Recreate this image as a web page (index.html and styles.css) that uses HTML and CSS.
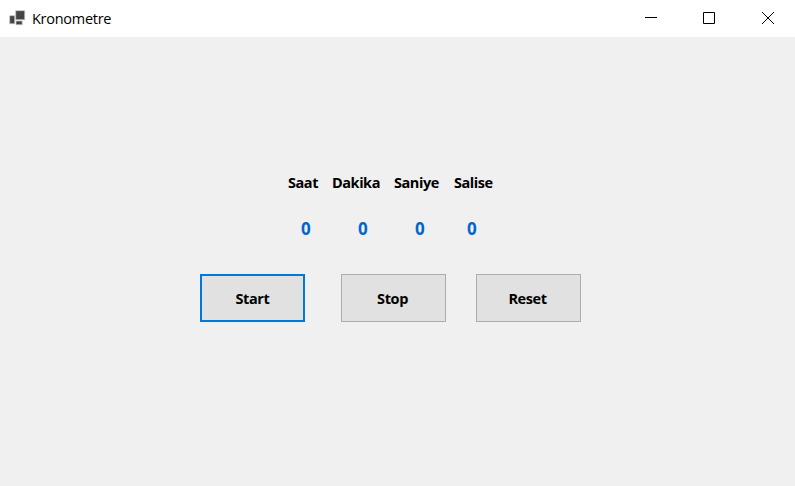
FILE: index.html
```html
<!DOCTYPE html>
<html lang="tr">
<head>
<meta charset="utf-8">
<title>Kronometre</title>
<link rel="stylesheet" href="styles.css">
</head>
<body>
<header class="titlebar">
  <svg class="app-icon" width="17" height="17" viewBox="0 0 17 17"><path fill="#444" stroke="#c4c4c4" stroke-width=".7" d="M.7 5.7h5v8h-5zM7 11h6.2v3.7H7zM6.7.7h9v9h-9z"/></svg>
  <span class="title">Kronometre</span>
  <nav class="controls">
    <svg width="58" height="37" viewBox="0 0 58 37"><path d="M23 17.5h12"/></svg>
    <svg width="59" height="37" viewBox="0 0 59 37"><path d="M23.5 12.5h11v11h-11z"/></svg>
    <svg width="56" height="37" viewBox="0 0 56 37"><path d="M23 12l12 12M35 12l-12 12"/></svg>
  </nav>
</header>
<main class="form">
  <div class="labels"><span>Saat</span><span>Dakika</span><span>Saniye</span><span>Salise</span></div>
  <div class="values"><span>0</span><span>0</span><span>0</span><span>0</span></div>
  <div class="buttons">
    <button class="btn start">Start</button>
    <button class="btn stop">Stop</button>
    <button class="btn reset">Reset</button>
  </div>
</main>
</body>
</html>
```
FILE: styles.css
```css
* { box-sizing: border-box; }
body { margin: 0; width: 795px; height: 486px; overflow: hidden; background: #f0f0f0; font-family: "Open Sans", "Noto Sans", sans-serif; color: #000; }
.titlebar { display: flex; align-items: center; height: 37px; padding-left: 9px; background: #fff; }
.app-icon { margin-bottom: 1px; }
.title { margin-left: 6px; font-size: 14.5px; letter-spacing: -0.28px; }
.controls { display: flex; margin-left: auto; }
.controls path { fill: none; stroke: #000; stroke-width: 1; }
.form { padding-top: 135px; }
.labels { display: grid; grid-template-columns: 44px 62px 60px 50px; padding-left: 288px; height: 22px; line-height: 22px; font-size: 14.5px; font-weight: 700; letter-spacing: -0.45px; }
.values { display: grid; grid-template-columns: 57px 57px 52px 20px; padding-left: 301px; margin-top: 23px; height: 24px; line-height: 24px; font-size: 17px; font-weight: 700; color: #0066cc; }
.buttons { display: flex; padding-left: 200px; margin-top: 33px; }
.btn { width: 105px; height: 48px; padding: 0 2px 0 0; border: 1px solid #adadad; background: #e1e1e1; font: 700 14.5px "Open Sans", "Noto Sans", sans-serif; letter-spacing: -0.4px; color: #000; }
.start { padding: 0; border: 2px solid #0078d7; }
.stop { margin-left: 36px; }
.reset { margin-left: 30px; }
```
